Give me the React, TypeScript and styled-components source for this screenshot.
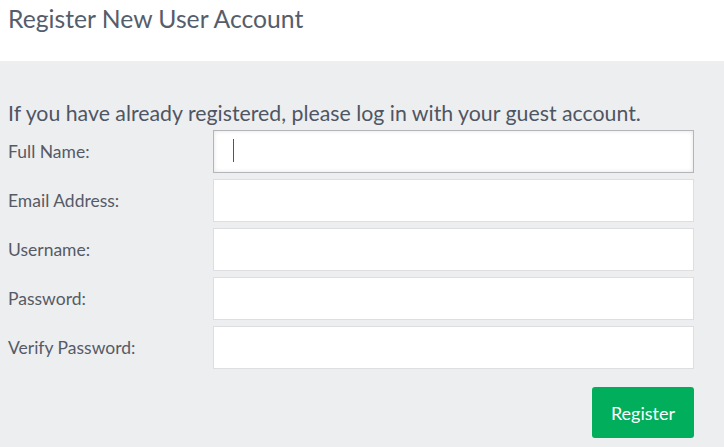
import styled, { createGlobalStyle } from 'styled-components'

const GlobalStyle = createGlobalStyle`
	html, body {
		margin: 0;
		padding: 0;
		background: #edeef0;
		font-family: Lato, "Open Sans", sans-serif;
	}
`

const fields = [
	{ label: 'Full Name:', type: 'text', focused: true },
	{ label: 'Email Address:', type: 'email' },
	{ label: 'Username:', type: 'text' },
	{ label: 'Password:', type: 'password' },
	{ label: 'Verify Password:', type: 'password' }
]

export default function App() {
	return (
		<>
			<GlobalStyle />
			<Header>
				<h1>Register New User Account</h1>
			</Header>
			<Main>
				<Intro>If you have already registered, please log in with your guest account.</Intro>
				<Form onSubmit={evt => evt.preventDefault()}>
					{fields.map(field => (
						<Row key={field.label}>
							<Label>{field.label}</Label>
							<InputWrap>
								<Input type={field.type} $focused={!!field.focused} />
								{field.focused && <Caret />}
							</InputWrap>
						</Row>
					))}
					<Actions>
						<Button type="submit">Register</Button>
					</Actions>
				</Form>
			</Main>
		</>
	)
}

const Header = styled.header`
	height: 61px;
	background: #fff;
	padding: 0 8px;
	box-sizing: border-box;
	h1 {
		margin: 0;
		padding-top: 4px;
		font-size: 24.7px;
		font-weight: 400;
		line-height: 30px;
		color: #555d6b;
	}
`

const Main = styled.main`
	padding: 36px 30px 0 8px;
`

const Intro = styled.p`
	margin: 0 0 1px;
	font-size: 21.3px;
	line-height: 32px;
	color: #4f5663;
`

const Form = styled.form`
	display: flex;
	flex-direction: column;
	gap: 6px;
`

const Row = styled.div`
	display: grid;
	grid-template-columns: 205px 481px;
	align-items: center;
`

const Label = styled.label`
	font-size: 17.5px;
	color: #555b66;
`

const InputWrap = styled.div`
	position: relative;
`

const Input = styled.input<{ $focused: boolean }>`
	display: block;
	width: 100%;
	height: 43px;
	box-sizing: border-box;
	border: 1px solid ${({ $focused }) => ($focused ? '#b3b5b8' : '#dcdee1')};
	box-shadow: ${({ $focused }) => ($focused ? 'inset 0 0 4px rgba(0,0,0,0.12)' : 'none')};
	background: #fff;
	padding: 0 12px;
	font-size: 16px;
	outline: none;
`

const Caret = styled.span`
	position: absolute;
	left: 20px;
	top: 9px;
	width: 1px;
	height: 23px;
	background: #555;
`

const Actions = styled.div`
	display: flex;
	justify-content: flex-end;
	padding-top: 12px;
`

const Button = styled.button`
	width: 102px;
	height: 51px;
	border: none;
	border-radius: 3px;
	background: #00ae5c;
	color: #fff;
	font-family: inherit;
	font-size: 18px;
	cursor: pointer;
`
